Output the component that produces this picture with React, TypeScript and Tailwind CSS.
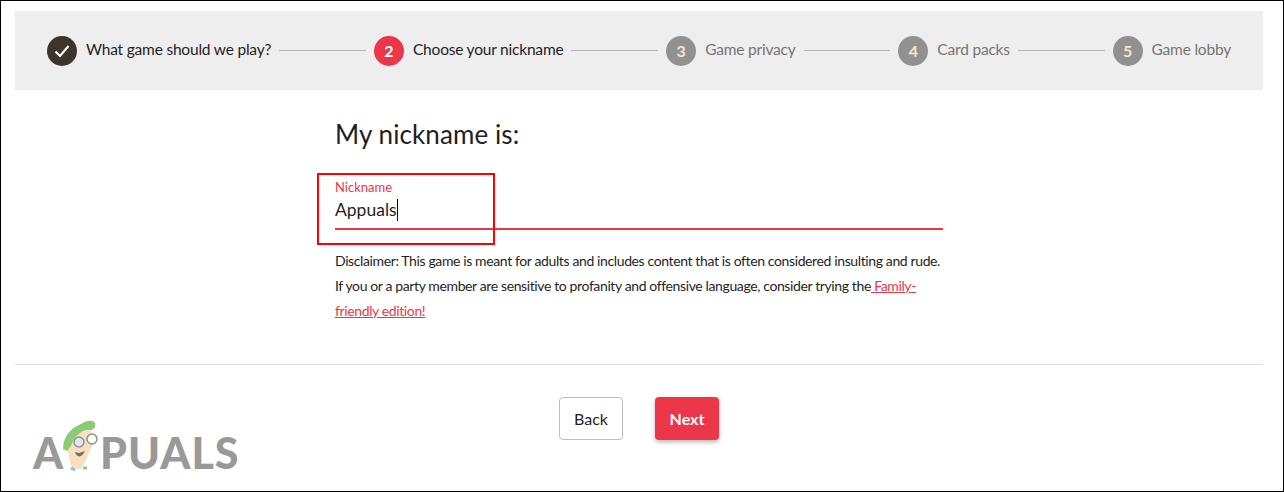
const font = "font-['Lato','Noto_Sans',sans-serif]";

interface StepProps {
  label: string;
  num?: string;
  state: "done" | "active" | "todo";
}

function Step({ label, num, state }: StepProps) {
  return (
    <div className="flex items-center shrink-0">
      <div
        className={`w-[30px] h-[30px] rounded-full flex items-center justify-center text-[16px] font-bold ${
          state === "done" ? "bg-[#3f342c] text-white" : state === "active" ? "bg-[#ec364a] text-white" : "bg-[#919191] text-[#f5e6c8]"
        }`}
      >
        {state === "done" ? (
          <svg width="18" height="18" viewBox="0 0 18 18" fill="none" stroke="white" strokeWidth="2.2">
            <path d="M2.5 9.5l4.5 4.5 8.5-10" />
          </svg>
        ) : (
          num
        )}
      </div>
      <span className={`ml-[9px] pb-[2px] text-[15.5px] tracking-[-0.2px] ${state === "todo" ? "text-[#757575]" : "text-[#1f1f1f]"}`}>
        {label}
      </span>
    </div>
  );
}

function Line() {
  return <div className="flex-1 h-px bg-[#b5b5b5] mx-2" />;
}

function Logo() {
  return (
    <div className="absolute left-[32px] top-[417px] w-[210px] h-[54px]">
      <span className="absolute left-0 top-[13px] text-[43px] leading-[44px] font-black text-[#999999] font-['Lato',sans-serif]">A</span>
      <span className="absolute left-[67px] top-[13px] text-[43px] leading-[44px] font-black tracking-[1px] text-[#999999] font-['Lato',sans-serif]">PUALS</span>
      <svg className="absolute left-[28px] top-0" width="40" height="54" viewBox="0 0 40 54">
        <path d="M6 30 L10 48 L13 51 L20 51 L26 40 L32 26 L30 12 L14 16 Z" fill="#f8dfbe" />
        <path d="M2 31 C2 18 10 10 20 6 C26 2 32 2 34 5 C35 9 33 12 30 12 C22 11 13 17 10 28 L6 33 Z" fill="#8ccb74" />
        <circle cx="18" cy="24" r="5" fill="#d6eaf3" stroke="#8f8f8f" strokeWidth="1.5" />
        <circle cx="31" cy="21" r="5" fill="#ffffff" stroke="#8f8f8f" strokeWidth="1.5" />
        <path d="M14 34 C16 40 21 40 24 33 L18 35 Z" fill="#6f6f6f" />
        <path d="M10 50 L14 52 M22 50 L26 50" stroke="#79c4e0" strokeWidth="3" />
      </svg>
    </div>
  );
}

export default function App() {
  return (
    <div className={`relative w-[1284px] h-[492px] bg-white border border-black pl-[14px] pr-[20px] pt-[10px] overflow-hidden ${font}`}>
      <div className="h-[79px] bg-[#eeeeee] flex items-center pl-8 pr-8">
        <Step state="done" label="What game should we play?" />
        <Line />
        <Step state="active" num="2" label="Choose your nickname" />
        <Line />
        <Step state="todo" num="3" label="Game privacy" />
        <Line />
        <Step state="todo" num="4" label="Card packs" />
        <Line />
        <Step state="todo" num="5" label="Game lobby" />
      </div>

      <div className="w-[608px] mx-auto mt-[28px] text-[#1f1f1f]">
        <h1 className="text-[26px] leading-[32px] tracking-[0.1px]">My nickname is:</h1>
        <div className="mt-[29px] border-b-2 border-[#ec364a] h-[51px]">
          <div className="text-[13px] leading-[16px] text-[#ec364a]">Nickname</div>
          <div className="flex items-center h-[26px] mt-[2px] text-[17.5px]">
            Appuals
            <span className="w-px h-[22px] bg-black" />
          </div>
        </div>
        <p className="mt-[18px] text-[14px] leading-[25px] tracking-[-0.38px]">
          Disclaimer: This game is meant for adults and includes content that is often considered insulting and rude.
          <br />
          If you or a party member are sensitive to profanity and offensive language, consider trying the
          <a href="#" className="text-[#ec364a] underline"> Family-friendly edition!</a>
        </p>
      </div>

      <div className="h-px bg-[#dddddd] mt-[41px]" />

      <div className="flex justify-center gap-8 mt-[32px]">
        <button className="w-16 h-[43px] rounded border border-[#bdbdbd] bg-white text-[16px] text-[#1f1f1f]">Back</button>
        <button className="w-16 h-[43px] rounded bg-[#ec364a] text-[16px] font-bold text-white shadow-[0_2px_4px_rgba(0,0,0,0.3)]">Next</button>
      </div>

      <div className="absolute left-[316px] top-[172px] w-[178px] h-[72px] border-2 border-[#ff0000]" />
      <Logo />
    </div>
  );
}
